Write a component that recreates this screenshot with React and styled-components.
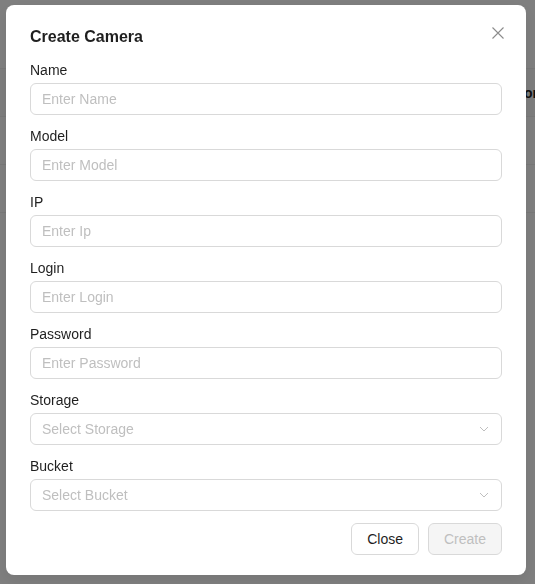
import React from 'react';
import styled, { createGlobalStyle } from 'styled-components';

const GlobalStyle = createGlobalStyle`
  html, body {
    margin: 0;
    padding: 0;
    background: #ffffff;
    font-family: "Liberation Sans", Arial, sans-serif;
  }
`;

const Page = styled.div`
  height: 584px;
  padding-top: 68px;
  box-sizing: border-box;
  overflow: hidden;
`;

const TableRow = styled.div`
  height: 47px;
  border-top: 1px solid #f0f0f0;
  display: flex;
  align-items: center;
  padding-left: 524px;
  background: ${(p) => (p.$head ? '#fafafa' : '#ffffff')};
  font-size: 14px;
  font-weight: 700;
  color: #1f1f1f;
  white-space: nowrap;
`;

const Overlay = styled.div`
  position: fixed;
  inset: 0;
  background: rgba(0, 0, 0, 0.5);
  padding: 5px 9px 9px 6px;
  box-sizing: border-box;
`;

const Modal = styled.div`
  position: relative;
  width: 520px;
  box-sizing: border-box;
  background: #ffffff;
  border-radius: 8px;
  padding: 20px 24px;
  box-shadow: 0 6px 16px rgba(0, 0, 0, 0.08);
`;

const Title = styled.h2`
  margin: 0 0 13px;
  font-size: 16px;
  line-height: 24px;
  font-weight: 700;
  color: #1f1f1f;
`;

const CloseIcon = styled.button`
  position: absolute;
  top: 22px;
  right: 22px;
  width: 12px;
  height: 12px;
  padding: 0;
  border: 0;
  background: none;
  display: flex;
  cursor: pointer;
`;

const Form = styled.div`
  display: flex;
  flex-direction: column;
  gap: 13px;
`;

const Field = styled.div`
  display: flex;
  flex-direction: column;
  gap: 4px;
`;

const Label = styled.label`
  font-size: 14px;
  line-height: 17px;
  color: #1f1f1f;
`;

const Input = styled.input`
  height: 32px;
  box-sizing: border-box;
  border: 1px solid #d9d9d9;
  border-radius: 6px;
  padding: 0 11px;
  font-family: inherit;
  font-size: 14px;
  color: #1f1f1f;
  outline: none;
  &::placeholder {
    color: #bfbfbf;
  }
`;

const Select = styled.div`
  height: 32px;
  box-sizing: border-box;
  border: 1px solid #d9d9d9;
  border-radius: 6px;
  padding: 0 12px 0 11px;
  display: flex;
  align-items: center;
  justify-content: space-between;
  font-size: 14px;
  color: #bfbfbf;
`;

const Footer = styled.div`
  margin-top: 12px;
  display: flex;
  justify-content: flex-end;
  gap: 9px;
`;

const Button = styled.button`
  height: 32px;
  padding: 0 15px;
  border-radius: 6px;
  border: 1px solid #d9d9d9;
  font-family: inherit;
  font-size: 14px;
  background: ${(p) => (p.disabled ? '#f5f5f5' : '#ffffff')};
  color: ${(p) => (p.disabled ? '#bfbfbf' : '#1f1f1f')};
  cursor: ${(p) => (p.disabled ? 'not-allowed' : 'pointer')};
`;

const Chevron = () => (
  <svg width="10" height="10" viewBox="0 0 10 10" fill="none">
    <path d="M1 3 L5 7 L9 3" stroke="#bfbfbf" strokeWidth="1" />
  </svg>
);

const inputs = [
  { label: 'Name', placeholder: 'Enter Name' },
  { label: 'Model', placeholder: 'Enter Model' },
  { label: 'IP', placeholder: 'Enter Ip' },
  { label: 'Login', placeholder: 'Enter Login' },
  { label: 'Password', placeholder: 'Enter Password', type: 'password' },
];

const selects = [
  { label: 'Storage', placeholder: 'Select Storage' },
  { label: 'Bucket', placeholder: 'Select Bucket' },
];

export default function App() {
  return (
    <>
      <GlobalStyle />
      <Page>
        <TableRow $head>on</TableRow>
        <TableRow />
        <TableRow />
        <TableRow />
      </Page>
      <Overlay>
        <Modal>
          <Title>Create Camera</Title>
          <CloseIcon aria-label="Close">
            <svg width="12" height="12" viewBox="0 0 12 12" fill="none">
              <path d="M0.5 0.5 L11.5 11.5 M11.5 0.5 L0.5 11.5" stroke="#8c8c8c" strokeWidth="1.1" />
            </svg>
          </CloseIcon>
          <Form>
            {inputs.map((f) => (
              <Field key={f.label}>
                <Label>{f.label}</Label>
                <Input type={f.type || 'text'} placeholder={f.placeholder} />
              </Field>
            ))}
            {selects.map((f) => (
              <Field key={f.label}>
                <Label>{f.label}</Label>
                <Select>
                  <span>{f.placeholder}</span>
                  <Chevron />
                </Select>
              </Field>
            ))}
          </Form>
          <Footer>
            <Button>Close</Button>
            <Button disabled>Create</Button>
          </Footer>
        </Modal>
      </Overlay>
    </>
  );
}
